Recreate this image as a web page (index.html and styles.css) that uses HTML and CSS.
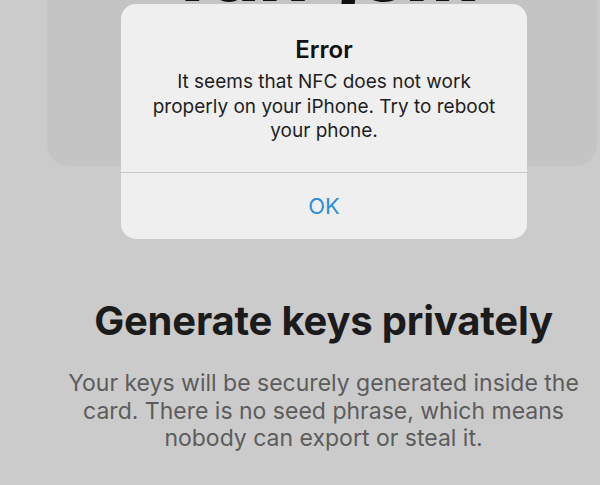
FILE: index.html
```html
<!DOCTYPE html>
<html lang="en">
<head>
    <meta charset="UTF-8">
    <meta name="viewport" content="width=device-width, initial-scale=1.0">
    <title>Tangem - Error</title>
    <link rel="stylesheet" href="styles.css">
</head>
<body>
    <div class="screen">
        <!-- card preview behind the alert -->
        <div class="card">
            <div class="card-logo">Tangem</div>
        </div>

        <div class="intro">
            <h1 class="intro-title">Generate keys privately</h1>
            <p class="intro-text">Your keys will be securely generated inside the card. There is no seed phrase, which means nobody can export or steal it.</p>
        </div>
    </div>

    <!-- system alert -->
    <div class="alert">
        <div class="alert-body">
            <h2 class="alert-title">Error</h2>
            <p class="alert-message">It seems that NFC does not work properly on your iPhone. Try to reboot your phone.</p>
        </div>
        <button class="alert-btn">OK</button>
    </div>
</body>
</html>
```

FILE: styles.css
```css
* {
    margin: 0;
    padding: 0;
    box-sizing: border-box;
    font-family: Inter, 'Noto Sans', sans-serif;
}

body {
    width: 600px;
    height: 485px;
    overflow: hidden;
    background-color: #cbcbcb;
    position: relative;
}

.screen {
    padding-left: 47px;
}

/* card behind */
.card {
    width: 550px;
    height: 200px;
    margin-top: -34px;
    background: #c4c4c4;
    border-radius: 22px;
    display: flex;
    justify-content: center;
    overflow: hidden;
}

.card-logo {
    font-size: 80px;
    font-weight: 800;
    color: #111;
    line-height: 1;
    margin-top: -34px;
    letter-spacing: -1px;
}

.intro {
    width: 553px;
    padding-top: 131px;
    text-align: center;
}

.intro-title {
    font-size: 40px;
    font-weight: 700;
    color: #1b1b1b;
    letter-spacing: -0.2px;
    line-height: 48px;
}

.intro-text {
    margin: 25px auto 0;
    width: 540px;
    font-size: 23px;
    line-height: 27.5px;
    color: #5c5c5c;
}

/* alert */
.alert {
    position: absolute;
    left: 121px;
    top: 4px;
    width: 406px;
    background: #efefef;
    border-radius: 15px;
    overflow: hidden;
    text-align: center;
}

.alert-body {
    padding: 33px 20px 22px;
    border-bottom: 1px solid #c9c9c9;
    height: 169px;
}

.alert-title {
    font-size: 24px;
    font-weight: 600;
    color: #111;
    line-height: 26px;
}

.alert-message {
    margin: 7px auto 0;
    width: 360px;
    font-size: 19px;
    line-height: 24.5px;
    color: #1e1e1e;
}

.alert-btn {
    display: block;
    width: 100%;
    height: 66px;
    border: none;
    background: none;
    font-size: 22px;
    color: #2a90d8;
    cursor: pointer;
}
```
